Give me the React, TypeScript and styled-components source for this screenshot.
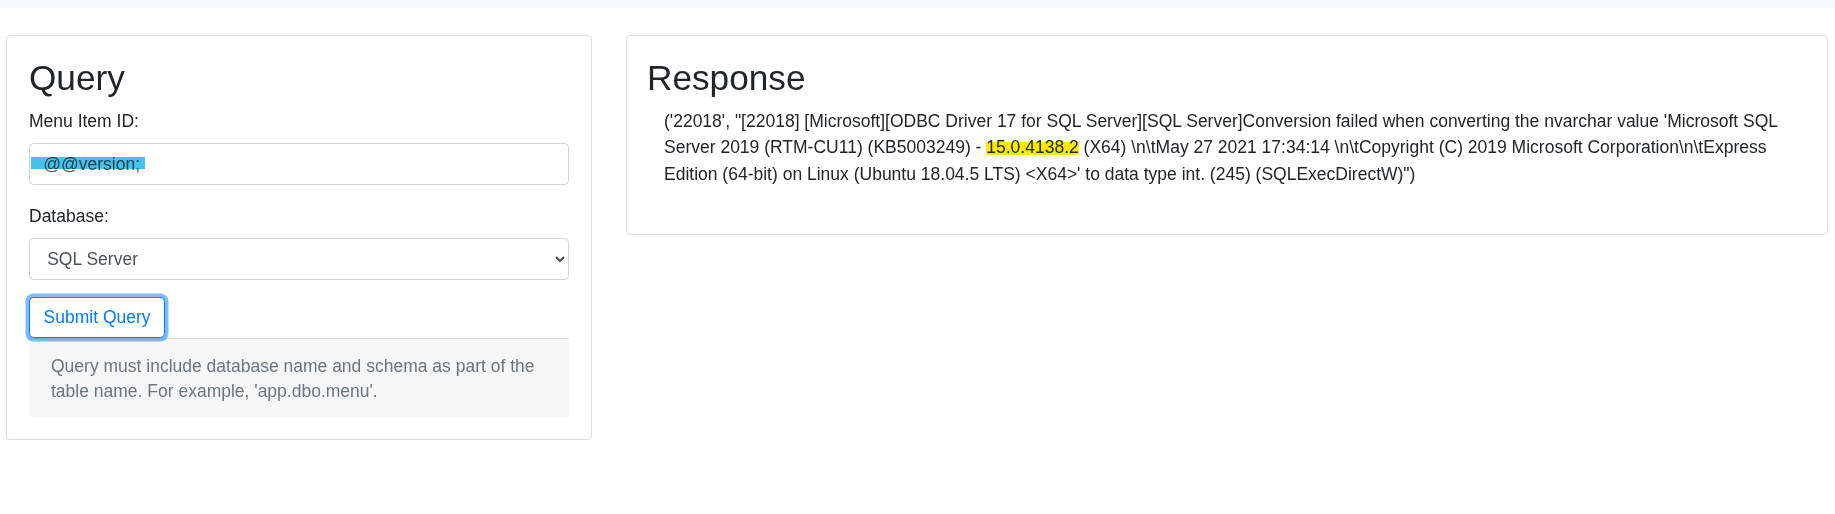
import React from "react";
import styled, { createGlobalStyle } from "styled-components";

const GlobalStyle = createGlobalStyle`
  *, *::before, *::after { box-sizing: border-box; }
  html, body { margin: 0; padding: 0; background: #ffffff; }
  body {
    font-family: "Liberation Sans", Arial, Helvetica, sans-serif;
    font-size: 17.5px;
    line-height: 26.4px;
    color: #212529;
  }
`;

const TopBar = styled.div`
  height: 8px;
  background: #f8f9fa;
`;

const Layout = styled.main`
  display: grid;
  grid-template-columns: 586fr 1202fr;
  column-gap: 34px;
  align-items: start;
  padding: 27px 7px 0 6px;
`;

const Card = styled.section<{ $padLeft?: number }>`
  border: 1px solid rgba(0, 0, 0, 0.125);
  border-radius: 4.4px;
  background: #ffffff;
  padding: 21px 22px 22px ${(p) => p.$padLeft ?? 22}px;
`;

const Heading = styled.h1`
  margin: 0 0 8.8px;
  font-size: 35.2px;
  font-weight: 400;
  line-height: 1.2;
  color: #212529;
`;

const FormGroup = styled.div`
  margin-bottom: 17.6px;
`;

const Label = styled.label`
  display: block;
  margin-bottom: 8.8px;
`;

const Field = styled.div`
  position: relative;
`;

const TextInput = styled.input`
  display: block;
  width: 100%;
  height: 41.8px;
  padding: 6.6px 13.2px;
  font: inherit;
  color: #495057;
  background: #ffffff;
  border: 1px solid #ced4da;
  border-radius: 4.4px;
  outline: none;
`;

const Marker = styled.span`
  position: absolute;
  left: 2px;
  top: 14px;
  width: 114px;
  height: 12px;
  background: #45c3ea;
  mix-blend-mode: multiply;
  pointer-events: none;
`;

const Select = styled.select`
  display: block;
  width: 100%;
  height: 41.8px;
  padding: 6.6px 13.2px;
  font: inherit;
  color: #495057;
  background-color: #ffffff;
  border: 1px solid #ced4da;
  border-radius: 4.4px;
  outline: none;
`;

const SubmitButton = styled.button`
  display: inline-block;
  font: inherit;
  color: #007bff;
  background: #ffffff;
  border: 1px solid #007bff;
  border-radius: 4.4px;
  padding: 6px 13.6px;
  line-height: 26.4px;
  box-shadow: 0 0 0 3.5px rgba(0, 123, 255, 0.5);
  cursor: pointer;
`;

const HelpNote = styled.div`
  background: rgba(0, 0, 0, 0.035);
  border-top: 1px solid rgba(0, 0, 0, 0.125);
  border-radius: 0 0 3.4px 3.4px;
  padding: 15px 22px 13px;
  color: #6c757d;
  line-height: 25px;
`;

const ResponseText = styled.p`
  margin: 0 0 25px;
  padding: 0 15px 0 17px;
`;

const Highlight = styled.span`
  background: linear-gradient(
    to bottom,
    transparent 25%,
    #ffea00 25%,
    #ffea00 92%,
    transparent 92%
  );
  border-radius: 3px;
`;

export default function App() {
  return (
    <>
      <GlobalStyle />
      <TopBar />
      <Layout>
        <Card>
          <Heading>Query</Heading>
          <FormGroup>
            <Label htmlFor="menu-item">Menu Item ID:</Label>
            <Field>
              <TextInput id="menu-item" type="text" readOnly value="@@version;" />
              <Marker />
            </Field>
          </FormGroup>
          <FormGroup>
            <Label htmlFor="database">Database:</Label>
            <Select id="database" defaultValue="sqlserver">
              <option value="sqlserver">SQL Server</option>
              <option value="mysql">MySQL</option>
              <option value="postgres">PostgreSQL</option>
            </Select>
          </FormGroup>
          <SubmitButton type="button">Submit Query</SubmitButton>
          <HelpNote>
            Query must include database name and schema as part of the table name. For example,
            'app.dbo.menu'.
          </HelpNote>
        </Card>
        <Card $padLeft={20}>
          <Heading>Response</Heading>
          <ResponseText>
            ('22018', "[22018] [Microsoft][ODBC Driver 17 for SQL Server][SQL Server]Conversion failed
            when converting the nvarchar value 'Microsoft SQL Server 2019 (RTM-CU11) (KB5003249) -{" "}
            <Highlight>15.0.4138.2</Highlight> (X64) \n\tMay 27 2021 17:34:14 \n\tCopyright (C) 2019
            Microsoft Corporation\n\tExpress Edition (64-bit) on Linux (Ubuntu 18.04.5 LTS) &lt;X64&gt;'
            to data type int. (245) (SQLExecDirectW)")
          </ResponseText>
        </Card>
      </Layout>
    </>
  );
}
